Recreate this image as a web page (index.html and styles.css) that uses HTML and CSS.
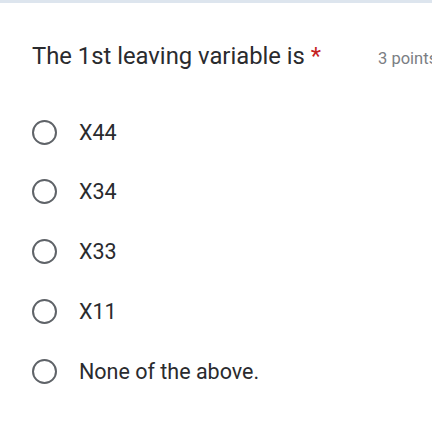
FILE: index.html
```html
<!DOCTYPE html>
<html>
<head>
<meta charset="utf-8">
<link rel="stylesheet" href="styles.css">
</head>
<body>
<div class="topbar"></div>
<div class="card">
  <div class="header">
    <div class="title">The 1st leaving variable is <span class="req">*</span></div>
    <div class="points">3 points</div>
  </div>
  <div class="options">
    <div class="option"><span class="radio"></span><span class="label">X44</span></div>
    <div class="option"><span class="radio"></span><span class="label">X34</span></div>
    <div class="option"><span class="radio"></span><span class="label">X33</span></div>
    <div class="option"><span class="radio"></span><span class="label">X11</span></div>
    <div class="option"><span class="radio"></span><span class="label">None of the above.</span></div>
  </div>
</div>
</body>
</html>
```
FILE: styles.css
```css
html, body {
  margin: 0;
  padding: 0;
  background: #ffffff;
  width: 432px;
  height: 432px;
  overflow: hidden;
  font-family: Roboto, "Liberation Sans", Arial, sans-serif;
}
.topbar {
  height: 3px;
  background: #dde5ee;
}
.card {
  padding: 39px 0 0 32px;
}
.header {
  display: flex;
  align-items: baseline;
  white-space: nowrap;
}
.title {
  font-size: 23.8px;
  color: #2a2b2e;
}
.req {
  color: #c5221f;
}
.points {
  margin-left: 57px;
  font-size: 16.5px;
  color: #7a7e83;
}
.options {
  margin-top: 49px;
  display: flex;
  flex-direction: column;
  gap: 33.75px;
}
.option {
  display: flex;
  align-items: center;
  height: 26px;
}
.radio {
  width: 21px;
  height: 21px;
  border: 2.5px solid #5f6368;
  border-radius: 50%;
}
.label {
  margin-left: 22px;
  font-size: 21.5px;
  color: #2a2b2e;
}
```
